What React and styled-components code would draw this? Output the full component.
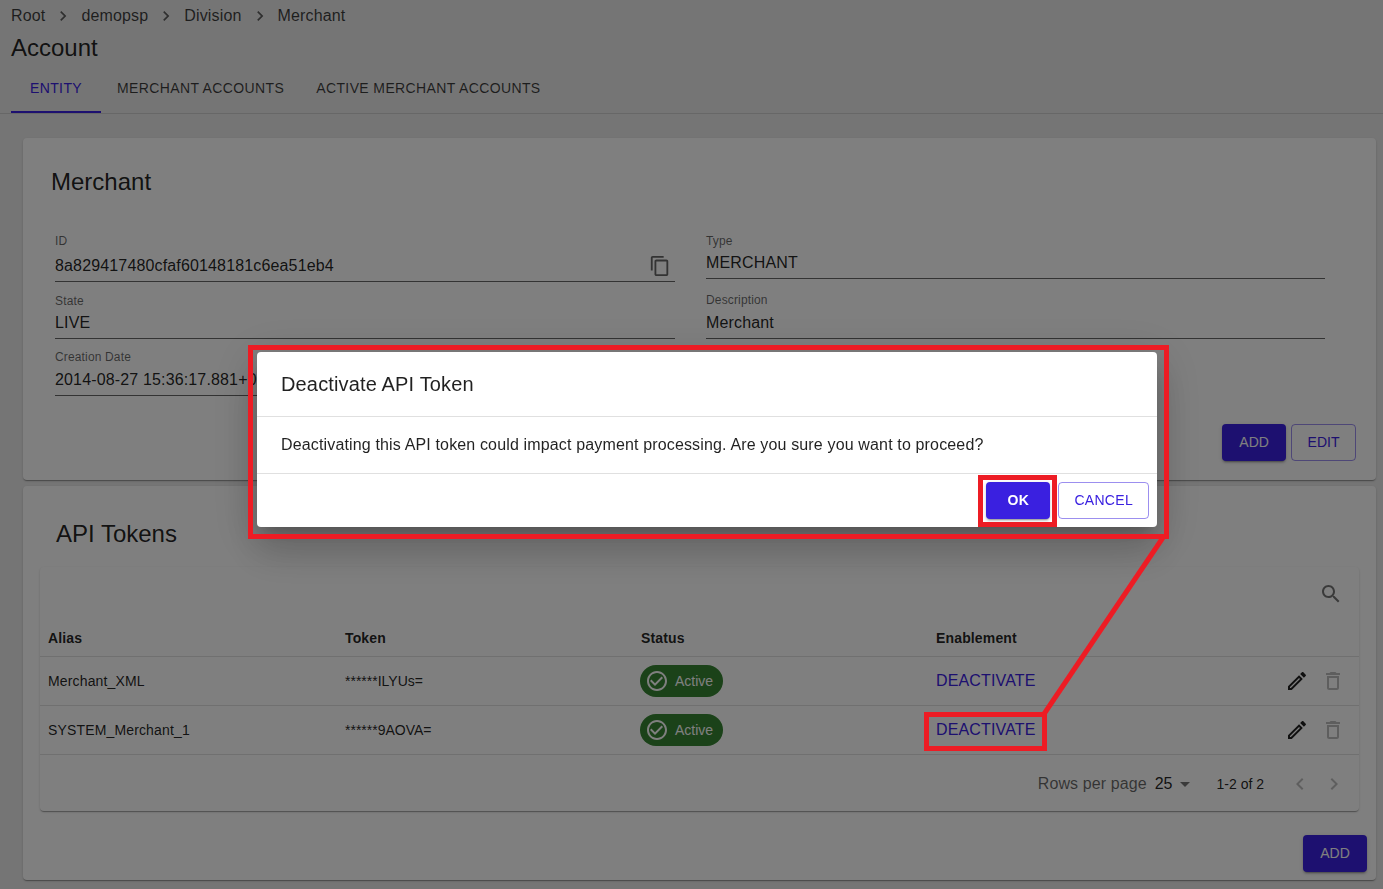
import React from "react"
import styled, { createGlobalStyle } from "styled-components"

const paths = {
  next: "M10 6L8.59 7.41 13.17 12l-4.58 4.59L10 18l6-6z",
  prev: "M15.41 7.41L14 6l-6 6 6 6 1.41-1.41L10.83 12z",
  copy: "M16 1H4c-1.1 0-2 .9-2 2v14h2V3h12V1zm3 4H8c-1.1 0-2 .9-2 2v14c0 1.1.9 2 2 2h11c1.1 0 2-.9 2-2V7c0-1.1-.9-2-2-2zm0 16H8V7h11v14z",
  search:
    "M15.5 14h-.79l-.28-.27C15.41 12.59 16 11.11 16 9.5 16 5.91 13.09 3 9.5 3S3 5.91 3 9.5 5.91 16 9.5 16c1.61 0 3.09-.59 4.23-1.57l.27.28v.79l5 4.99L20.49 19l-4.99-5zm-6 0C7.01 14 5 11.99 5 9.5S7.01 5 9.5 5 14 7.01 14 9.5 11.99 14 9.5 14z",
  check:
    "M16.59 7.58L10 14.17l-3.59-3.58L5 12l5 5 8-8zM12 2C6.48 2 2 6.48 2 12s4.48 10 10 10 10-4.48 10-10S17.52 2 12 2zm0 18c-4.41 0-8-3.59-8-8s3.59-8 8-8 8 3.59 8 8-3.59 8-8 8z",
  edit: "M14.06 9.02l.92.92L5.92 19H5v-.92l9.06-9.06M17.66 3c-.25 0-.51.1-.7.29l-1.83 1.83 3.75 3.75 1.83-1.83c.39-.39.39-1.02 0-1.41l-2.34-2.34c-.2-.2-.45-.29-.71-.29zm-3.6 3.19L3 17.25V21h3.75L17.81 9.94l-3.75-3.75z",
  trash: "M6 19c0 1.1.9 2 2 2h8c1.1 0 2-.9 2-2V7H6v12zM8 9h8v10H8V9zm7.5-5l-1-1h-5l-1 1H5v2h14V4z",
  caret: "M7 10l5 5 5-5z",
}

const Icon = ({ name, size = 24, color = "rgba(0,0,0,0.87)" }) => (
  <svg width={size} height={size} viewBox="0 0 24 24" fill={color} style={{ display: "block", flexShrink: 0 }}>
    <path d={paths[name]} />
  </svg>
)

const tokens = [
  { alias: "Merchant_XML", token: "******ILYUs=" },
  { alias: "SYSTEM_Merchant_1", token: "******9AOVA=" },
]

const App = () => (
  <>
    <GlobalStyle />
    <Page>
      <Breadcrumbs>
        <span>Root</span>
        <Icon name="next" size={20} color="rgba(0,0,0,0.6)" />
        <span>demopsp</span>
        <Icon name="next" size={20} color="rgba(0,0,0,0.6)" />
        <span>Division</span>
        <Icon name="next" size={20} color="rgba(0,0,0,0.6)" />
        <span>Merchant</span>
      </Breadcrumbs>
      <PageTitle>Account</PageTitle>
      <Tabs>
        <Tab $active>ENTITY</Tab>
        <Tab>MERCHANT ACCOUNTS</Tab>
        <Tab>ACTIVE MERCHANT ACCOUNTS</Tab>
      </Tabs>

      <MerchantCard>
        <MerchantTitle>Merchant</MerchantTitle>
        <FieldGrid>
          <FieldColumn>
            <Field>
              <FieldLabel>ID</FieldLabel>
              <FieldValue $top={6}>
                8a829417480cfaf60148181c6ea51eb4
                <CopyIcon>
                  <Icon name="copy" size={22} color="rgba(0,0,0,0.6)" />
                </CopyIcon>
              </FieldValue>
            </Field>
            <Field>
              <FieldLabel>State</FieldLabel>
              <FieldValue $top={3}>LIVE</FieldValue>
            </Field>
            <Field $pull={1}>
              <FieldLabel>Creation Date</FieldLabel>
              <FieldValue $top={4}>2014-08-27 15:36:17.881+0000</FieldValue>
            </Field>
          </FieldColumn>
          <FieldColumn $gap={14}>
            <Field>
              <FieldLabel>Type</FieldLabel>
              <FieldValue $top={3}>MERCHANT</FieldValue>
            </Field>
            <Field>
              <FieldLabel>Description</FieldLabel>
              <FieldValue $top={4}>Merchant</FieldValue>
            </Field>
          </FieldColumn>
        </FieldGrid>
        <CardActions>
          <FilledButton>ADD</FilledButton>
          <OutlinedButton>EDIT</OutlinedButton>
        </CardActions>
      </MerchantCard>

      <TokensCard>
        <TokensTitle>API Tokens</TokensTitle>
        <TablePaper>
          <TableToolbar>
            <Icon name="search" color="rgba(0,0,0,0.54)" />
          </TableToolbar>
          <HeadRow>
            <span>Alias</span>
            <span>Token</span>
            <span>Status</span>
            <span>Enablement</span>
          </HeadRow>
          {tokens.map(item => (
            <BodyRow key={item.alias}>
              <span>{item.alias}</span>
              <TokenText>{item.token}</TokenText>
              <span>
                <Chip>
                  <Icon name="check" color="#fff" />
                  Active
                </Chip>
              </span>
              <DeactivateLink>DEACTIVATE</DeactivateLink>
              <RowActions>
                <Icon name="edit" />
                <Icon name="trash" color="rgba(0,0,0,0.26)" />
              </RowActions>
            </BodyRow>
          ))}
          <Pagination>
            <RowsLabel>Rows per page</RowsLabel>
            <RowsValue>25</RowsValue>
            <Icon name="caret" color="rgba(0,0,0,0.54)" />
            <PageRange>1-2 of 2</PageRange>
            <PageArrows>
              <Icon name="prev" color="rgba(0,0,0,0.26)" />
              <Icon name="next" color="rgba(0,0,0,0.26)" />
            </PageArrows>
          </Pagination>
        </TablePaper>
        <TokensActions>
          <FilledButton>ADD</FilledButton>
        </TokensActions>
      </TokensCard>
    </Page>

    <Backdrop>
      <Dialog>
        <DialogTitle>Deactivate API Token</DialogTitle>
        <DialogBody>Deactivating this API token could impact payment processing. Are you sure you want to proceed?</DialogBody>
        <DialogActions>
          <OkButton>OK</OkButton>
          <CancelButton>CANCEL</CancelButton>
        </DialogActions>
      </Dialog>
    </Backdrop>

    <DialogMark />
    <OkMark />
    <LinkMark />
    <Connector width="1383" height="889" viewBox="0 0 1383 889">
      <line x1="1164" y1="536" x2="1044" y2="714" stroke="#ed1c24" strokeWidth="5" />
    </Connector>
  </>
)

const GlobalStyle = createGlobalStyle`
  html, body {
    margin: 0;
    height: 100%;
    overflow: hidden;
    background: #ebebeb;
    font-family: "Liberation Sans", Arial, sans-serif;
    letter-spacing: 0.15px;
    color: rgba(0, 0, 0, 0.87);
  }
  * {
    box-sizing: border-box;
  }
`

const Page = styled.div`
  height: 889px;
  padding-top: 5px;
`

const Breadcrumbs = styled.div`
  display: flex;
  align-items: center;
  gap: 8px;
  height: 22px;
  padding-left: 11px;
  font-size: 16px;
  color: rgba(0, 0, 0, 0.75);
`

const PageTitle = styled.div`
  padding-left: 11px;
  margin-top: 7px;
  font-size: 24px;
  line-height: 28px;
  letter-spacing: 0;
`

const Tabs = styled.div`
  display: flex;
  height: 50px;
  margin-top: 2px;
  padding-left: 11px;
  border-bottom: 1px solid rgba(0, 0, 0, 0.12);
`

const Tab = styled.div`
  display: flex;
  align-items: center;
  justify-content: center;
  min-width: 90px;
  height: 49px;
  padding: 0 16px;
  font-size: 14px;
  letter-spacing: 0.38px;
  color: ${props => (props.$active ? "#3a20e0" : "rgba(0,0,0,0.75)")};
  border-bottom: 2px solid ${props => (props.$active ? "#3a20e0" : "transparent")};
`

const Card = styled.div`
  margin: 0 7px 0 23px;
  border-radius: 4px;
  background: #fff;
  box-shadow: 0 2px 1px -1px rgba(0, 0, 0, 0.2), 0 1px 1px rgba(0, 0, 0, 0.14), 0 1px 3px rgba(0, 0, 0, 0.12);
`

const MerchantCard = styled(Card)`
  height: 342px;
  margin-top: 24px;
  padding: 30px 20px 0 28px;
`

const MerchantTitle = styled.div`
  font-size: 24px;
  line-height: 28px;
  letter-spacing: 0;
`

const FieldGrid = styled.div`
  display: grid;
  grid-template-columns: 620px 619px;
  gap: 31px;
  margin-top: 38px;
  padding-left: 4px;
`

const FieldColumn = styled.div`
  display: flex;
  flex-direction: column;
  gap: ${props => props.$gap || 12}px;
`

const Field = styled.div`
  margin-top: ${props => -(props.$pull || 0)}px;
  border-bottom: 1px solid rgba(0, 0, 0, 0.6);
  padding-bottom: 3px;
`

const FieldLabel = styled.div`
  font-size: 12px;
  line-height: 14px;
  color: rgba(0, 0, 0, 0.6);
`

const FieldValue = styled.div`
  position: relative;
  margin-top: ${props => props.$top}px;
  font-size: 16px;
  line-height: 24px;
`

const CopyIcon = styled.span`
  position: absolute;
  right: 4px;
  top: 1px;
`

const CardActions = styled.div`
  display: flex;
  justify-content: flex-end;
  gap: 5px;
  margin-top: 28px;
`

const Button = styled.button`
  height: 36.5px;
  padding: 0 16px;
  border-radius: 4px;
  font-family: inherit;
  font-size: 14px;
  letter-spacing: 0;
`

const FilledButton = styled(Button)`
  min-width: 64px;
  border: none;
  background: #3a20e0;
  color: #fff;
  box-shadow: 0 3px 1px -2px rgba(0, 0, 0, 0.2), 0 2px 2px rgba(0, 0, 0, 0.14), 0 1px 5px rgba(0, 0, 0, 0.12);
`

const OutlinedButton = styled(Button)`
  min-width: 64px;
  padding: 0 15.5px;
  border: 1px solid rgba(58, 32, 224, 0.5);
  background: transparent;
  color: #3a20e0;
`

const TokensCard = styled(Card)`
  height: 394px;
  margin-top: 6px;
  padding: 34px 9px 0 16px;
`

const TokensTitle = styled.div`
  padding-left: 17px;
  font-size: 24px;
  line-height: 28px;
  letter-spacing: 0;
`

const TablePaper = styled.div`
  margin: 19px 0 0 1px;
  width: 1319px;
  height: 244px;
  border-radius: 4px;
  background: #fff;
  box-shadow: 0 2px 1px -1px rgba(0, 0, 0, 0.2), 0 1px 1px rgba(0, 0, 0, 0.14), 0 1px 3px rgba(0, 0, 0, 0.12);
`

const TableToolbar = styled.div`
  display: flex;
  justify-content: flex-end;
  align-items: center;
  height: 52px;
  padding: 2px 16px 0 0;
`

const rowColumns = `
  display: grid;
  grid-template-columns: 297px 296px 295px 1fr auto;
  align-items: center;
  padding: 0 14px 0 8px;
  border-bottom: 1px solid rgba(0, 0, 0, 0.12);
  font-size: 14px;
`

const HeadRow = styled.div`
  ${rowColumns}
  height: 38px;
  font-weight: 700;
`

const BodyRow = styled.div`
  ${rowColumns}
  height: 49px;
`

const TokenText = styled.span`
  letter-spacing: 0;
`

const Chip = styled.span`
  display: inline-flex;
  align-items: center;
  gap: 6px;
  height: 32px;
  margin-left: -1px;
  padding: 0 10px 0 5px;
  border-radius: 16px;
  background: #368432;
  color: #fff;
  font-size: 14px;
  letter-spacing: 0;
`

const DeactivateLink = styled.span`
  font-size: 16px;
  color: #3a20e0;
`

const RowActions = styled.div`
  display: flex;
  gap: 12px;
`

const Pagination = styled.div`
  display: flex;
  align-items: center;
  justify-content: flex-end;
  height: 56px;
  padding: 2px 13px 0 0;
`

const RowsLabel = styled.span`
  font-size: 16px;
  letter-spacing: 0.1px;
  color: rgba(0, 0, 0, 0.6);
`

const RowsValue = styled.span`
  margin-left: 8px;
  font-size: 16px;
  letter-spacing: 0;
`

const PageRange = styled.span`
  margin-left: 20px;
  font-size: 14px;
  letter-spacing: 0;
`

const PageArrows = styled.div`
  display: flex;
  gap: 10px;
  margin-left: 24px;
`

const TokensActions = styled.div`
  display: flex;
  justify-content: flex-end;
  margin-top: 24px;
`

const Backdrop = styled.div`
  position: fixed;
  inset: 0;
  display: flex;
  justify-content: flex-start;
  align-items: flex-start;
  padding: 352px 0 0 257px;
  background: rgba(0, 0, 0, 0.5);
`

const Dialog = styled.div`
  width: 900px;
  height: 175px;
  border-radius: 4px;
  background: #fff;
  box-shadow: 0 11px 15px -7px rgba(0, 0, 0, 0.2), 0 24px 38px 3px rgba(0, 0, 0, 0.14), 0 9px 46px 8px rgba(0, 0, 0, 0.12);
`

const DialogTitle = styled.div`
  display: flex;
  align-items: center;
  height: 65px;
  padding: 0 24px;
  font-size: 20px;
  border-bottom: 1px solid rgba(0, 0, 0, 0.12);
`

const DialogBody = styled.div`
  display: flex;
  align-items: center;
  height: 57px;
  padding: 0 24px;
  font-size: 16px;
  border-bottom: 1px solid rgba(0, 0, 0, 0.12);
`

const DialogActions = styled.div`
  display: flex;
  justify-content: flex-end;
  gap: 8px;
  padding: 8px;
`

const OkButton = styled(FilledButton)`
  font-weight: 700;
  letter-spacing: 0.4px;
`

const CancelButton = styled(OutlinedButton)`
  padding: 0 15px;
  letter-spacing: 0.3px;
`

const Mark = styled.div`
  position: fixed;
  border: 5px solid #ed1c24;
  pointer-events: none;
`

const DialogMark = styled(Mark)`
  left: 248px;
  top: 345px;
  width: 921px;
  height: 194px;
`

const OkMark = styled(Mark)`
  left: 978px;
  top: 475px;
  width: 79px;
  height: 52px;
`

const LinkMark = styled(Mark)`
  left: 924px;
  top: 712px;
  width: 123px;
  height: 39px;
`

const Connector = styled.svg`
  position: fixed;
  inset: 0;
  pointer-events: none;
`

export default App
